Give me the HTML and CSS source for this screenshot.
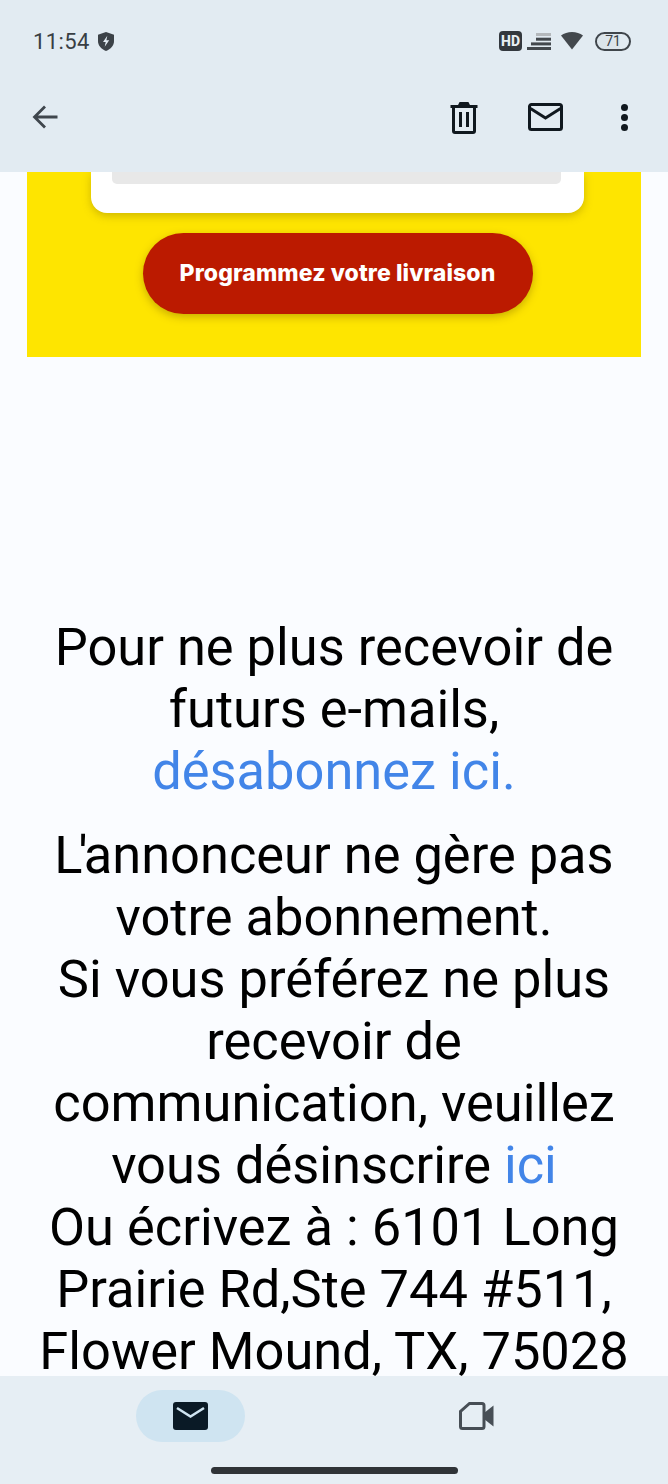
FILE: index.html
```html
<!DOCTYPE html>
<html lang="fr">
<head>
<meta charset="utf-8">
<title>E-mail</title>
<link rel="stylesheet" href="styles.css">
</head>
<body>
<div class="screen">
  <header class="top">
    <div class="status">
      <div class="status-left">
        <span class="time">11:54</span>
        <svg class="shield" viewBox="0 0 18 20"><path d="M9 0.5 17 3.2V9.5c0 4.6-3.3 8.2-8 10-4.7-1.800-8-5.400-8-10V3.200Z" fill="#3c4248"/><path d="M10.300 4.200 6 10.500h2.700L7.700 15.200 12.200 8.700H9.400Z" fill="#e2ebf2"/></svg>
      </div>
      <div class="status-right">
        <span class="hd">HD</span>
        <svg class="signal" viewBox="0 0 24 17"><rect x="9" y="0" width="15" height="3" fill="#b4b8bc"/><rect x="9" y="4.700" width="15" height="3" fill="#43484d"/><rect x="4" y="9.400" width="20" height="3" fill="#43484d"/><rect x="0" y="14" width="24" height="3" fill="#43484d"/></svg>
        <svg class="wifi" viewBox="0 0 22 18"><path d="M11 0C6.800 0 3 1.300 0 3.400L11 17.500 22 3.400C19 1.300 15.200 0 11 0Z" fill="#43484d"/></svg>
        <span class="battery"><span class="battery-level"></span><span class="battery-num">71</span></span>
      </div>
    </div>
    <nav class="toolbar">
      <svg class="back" viewBox="0 0 28 28"><path d="M26.500 14H3.500M14 3.500 3.500 14 14 24.500" fill="none" stroke="#3f464d" stroke-width="2.800"/></svg>
      <div class="actions">
        <svg class="trash" viewBox="0 0 28 32"><path d="M0.500 4.500H27.500M9 4.500 10.500 1.500H17.500L19 4.500M3.500 4.500V29a1.500 1.500 0 0 0 1.500 1.500H23a1.500 1.500 0 0 0 1.500-1.500V4.500M10.500 10V25M17.500 10V25" fill="none" stroke="#10181f" stroke-width="3"/></svg>
        <svg class="mail" viewBox="0 0 35 28"><path d="M3.500 1.500H31.500a2 2 0 0 1 2 2V24.500a2 2 0 0 1-2 2H3.500a2 2 0 0 1-2-2V3.500a2 2 0 0 1 2-2Z" fill="none" stroke="#10181f" stroke-width="3"/><path d="M2.500 5.500 17.500 15 32.500 5.500" fill="none" stroke="#10181f" stroke-width="3"/></svg>
        <div class="dots"><i></i><i></i><i></i></div>
      </div>
    </nav>
  </header>

  <main class="content">
    <section class="promo">
      <div class="card"><div class="card-inner"></div></div>
      <a class="cta">Programmez votre livraison</a>
    </section>
    <section class="legal">
      <p>Pour ne plus recevoir de futurs e-mails,<br><a class="link">désabonnez ici.</a></p>
      <p><span class="tight">L'</span>annonceur ne gère pas votre abonnement.<br>Si vous préférez ne plus recevoir de communication, veuillez vous désinscrire <a class="link">ici</a><br>Ou écrivez à : 6101 Long Prairie Rd,Ste 744 #511, Flower Mound, TX, 75028</p>
    </section>
  </main>

  <footer class="bottom">
    <div class="tabs">
      <div class="tab-active">
        <svg class="tab-mail" viewBox="0 0 35 28"><rect width="35" height="28" rx="3" fill="#0a1a26"/><path d="M4 6 17.500 14.500 31 6" fill="none" stroke="#cfe4f1" stroke-width="2.600"/></svg>
      </div>
      <svg class="video" viewBox="0 0 35 28"><path d="M10.500 1.500H23a2 2 0 0 1 2 2V24.500a2 2 0 0 1-2 2H3.500a2 2 0 0 1-2-2V9.500Z" fill="none" stroke="#474e55" stroke-width="3"/><path d="M25 11 34.500 3.500V24.500L25 17Z" fill="#474e55"/></svg>
    </div>
    <div class="home-bar"></div>
  </footer>
</div>
</body>
</html>
```
FILE: styles.css
```css
* { box-sizing: border-box; }
html, body { margin: 0; padding: 0; }
body { font-family: Roboto, "Liberation Sans", sans-serif; background: #fafcff; }
.screen { width: 668px; height: 1484px; display: flex; flex-direction: column; overflow: hidden; }

.top { height: 172px; flex: none; background: #e2ebf2; }
.status { height: 82px; padding: 27px 37px 0 33px; display: flex; justify-content: space-between; align-items: flex-start; }
.status-left { display: flex; align-items: center; gap: 7px; height: 28px; }
.time { font-size: 22px; color: #383e44; letter-spacing: 0.4px; }
.shield { width: 18px; height: 21px; }
.status-right { display: flex; align-items: center; height: 28px; }
.hd { width: 23px; height: 20px; margin-right: -1px; border-radius: 4px; background: #33383e; color: #e8eef3; font: 800 14px/20px Roboto, sans-serif; text-align: center; }
.signal { width: 24px; height: 17px; margin-left: 6px; }
.wifi { width: 22px; height: 18px; margin-left: 10px; }
.battery { position: relative; width: 36px; height: 19px; margin-left: 12px; border: 2px solid #3f454b; border-radius: 10px; overflow: hidden; display: flex; align-items: center; justify-content: center; }
.battery-level { position: absolute; left: 0; top: 0; bottom: 0; width: 71%; background: #d2d9df; opacity: 0.35; }
.battery-num { position: relative; font-size: 14px; line-height: 15px; color: #3c4248; }

.toolbar { height: 90px; padding: 20px 40px 0 31px; display: flex; justify-content: space-between; align-items: flex-start; }
.back { width: 28px; height: 28px; margin-top: 1px; }
.actions { display: flex; align-items: flex-start; }
.trash { width: 28px; height: 32px; }
.mail { width: 35px; height: 28px; margin-left: 50px; margin-top: 1px; }
.dots { display: flex; flex-direction: column; gap: 3px; margin-left: 58px; margin-top: 2px; }
.dots i { display: block; width: 7px; height: 7px; border-radius: 50%; background: #10181f; }

.content { flex: 1; min-height: 0; overflow: hidden; }
.promo { margin: 0 27px; height: 185px; background: #fee500; padding-left: 7px; display: flex; flex-direction: column; align-items: center; }
.card { width: 493px; height: 41px; background: #fff; border-radius: 0 0 16px 16px; box-shadow: 0 3px 8px rgba(120, 100, 0, 0.35); }
.card-inner { width: 449px; height: 12px; margin: 0 0 0 21px; background: #e8e8e8; border-radius: 0 0 5px 5px; }
.cta { width: 390px; height: 81px; margin-top: 20px; border-radius: 41px; background: #bb1a00; color: #fff; font: 800 23px/80px Inter, sans-serif; letter-spacing: 0.1px; text-align: center; box-shadow: 0 3px 8px rgba(120, 90, 0, 0.4); }

.legal { width: 600px; margin: 0 auto; padding-top: 259px; text-align: center; color: #000; font-size: 52.400px; line-height: 62px; }
.legal p { margin: 0 0 22px; }
.tight { letter-spacing: -4px; }
.link { color: #4285e8; }

.bottom { height: 108px; flex: none; background: #e6eef4; }
.tabs { height: 91px; display: flex; align-items: flex-start; padding: 14px 0 0 136px; }
.tab-active { width: 109px; height: 52px; border-radius: 26px; background: #cfe4f1; display: flex; align-items: center; justify-content: center; }
.tab-mail { width: 35px; height: 28px; }
.video { width: 35px; height: 28px; margin: 12px 0 0 214px; }
.home-bar { width: 247px; height: 7px; margin: 0 auto; border-radius: 3.500px; background: #2f3337; }
```
